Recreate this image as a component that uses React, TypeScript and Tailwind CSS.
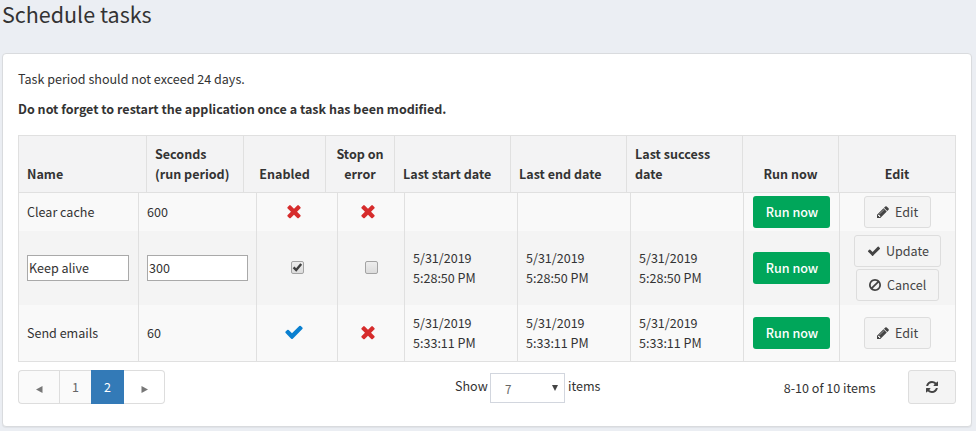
import type { ReactNode } from 'react';

const PATHS = {
  check:
    'M1671 566q0 40-28 68l-724 724-136 136q-28 28-68 28t-68-28l-136-136-362-362q-28-28-28-68t28-68l136-136q28-28 68-28t68 28l294 295 656-657q28-28 68-28t68 28l136 136q28 28 28 68z',
  times:
    'M1490 1322q0 40-28 68l-136 136q-28 28-68 28t-68-28l-294-294-294 294q-28 28-68 28t-68-28l-136-136q-28-28-28-68t28-68l294-294-294-294q-28-28-28-68t28-68l136-136q28-28 68-28t68 28l294 294 294-294q28-28 68-28t68 28l136 136q28 28 28 68t-28 68l-294 294 294 294q28 28 28 68z',
  pencil:
    'M491 1536l91-91-235-235-91 91v107h128v128h107zm523-928q0-22-22-22-10 0-17 7l-542 542q-7 7-7 17 0 22 22 22 10 0 17-7l542-542q7-7 7-17zm-54-192l416 416-832 832h-416v-416zm683 96q0 53-37 90l-166 166-416-416 166-165q36-38 90-38 53 0 91 38l235 234q37 39 37 91z',
  ban: 'M1440 893q0-161-87-295l-754 753q137 89 297 89 111 0 211.5-43.5t173.5-116.5 116-174.5 43-212.5zm-999 299l755-754q-135-91-300-91-148 0-273 73t-198 199-73 274q0 162 89 299zm1223-299q0 157-61 300t-163.5 246-245 164-298.5 61-298.5-61-245-164-163.5-246-61-300 61-299.5 163.5-245.5 245-164 298.5-61 298.5 61 245 164 163.5 245.5 61 299.5z',
  refresh:
    'M1639 1056q0 5-1 7-64 268-268 434.5t-478 166.5q-146 0-282.5-55t-243.5-157l-129 129q-19 19-45 19t-45-19-19-45v-448q0-26 19-45t45-19h448q26 0 45 19t19 45-19 45l-137 137q71 66 161 102t187 36q134 0 250-65t186-179q11-17 53-117 8-23 30-23h192q13 0 22.5 9.5t9.5 22.5zm25-800v448q0 26-19 45t-45 19h-448q-26 0-45-19t-19-45 19-45l138-138q-148-137-349-137-134 0-250 65t-186 179q-11 17-53 117-8 23-30 23h-199q-13 0-22.5-9.5t-9.5-22.5v-7q65-268 270-434.5t480-166.5q146 0 284 55.5t245 156.5l130-129q19-19 45-19t45 19 19 45z',
};

function Icon({ name, className }: { name: keyof typeof PATHS; className: string }) {
  return (
    <svg viewBox="0 0 1792 1792" fill="currentColor" className={`shrink-0 ${className}`}>
      <path d={PATHS[name]} />
    </svg>
  );
}

function HeadCell({ children, center }: { children: ReactNode; center?: boolean }) {
  return (
    <div
      className={`flex flex-col justify-end border-l border-[#e0e0e0] px-2 pb-2 font-bold whitespace-nowrap ${center ? 'items-center' : ''}`}
    >
      {children}
    </div>
  );
}

function Cell({ children, center }: { children?: ReactNode; center?: boolean }) {
  return (
    <div
      className={`flex flex-col justify-center border-l border-[#e0e0e0] px-2 whitespace-nowrap ${center ? 'items-center' : ''}`}
    >
      {children}
    </div>
  );
}

function Row({ className, children }: { className: string; children: ReactNode }) {
  return (
    <div className={`grid grid-cols-[120px_118px_81px_67px_113px_113px_113px_96px_116px] ${className}`}>
      {children}
    </div>
  );
}

function Status({ on }: { on: boolean }) {
  return on ? (
    <Icon name="check" className="mr-[5.5px] mb-[2px] size-5 text-[#0a80d0]" />
  ) : (
    <Icon name="times" className="mr-[5.5px] mb-[2px] size-5 text-[#d62c2c]" />
  );
}

function Check({ checked }: { checked?: boolean }) {
  return (
    <div className="mb-[2px] flex size-[13px] items-center justify-center rounded-[2px] border border-[#a3a3a3] bg-linear-to-b from-[#ededed] to-[#dcdcdc]">
      {checked && (
        <svg viewBox="0 0 11 11" className="size-[11px]">
          <path d="M1.6 5.3 4.2 8 9.2 2" fill="none" stroke="#404040" strokeWidth="2.4" />
        </svg>
      )}
    </div>
  );
}

function RunCell() {
  return (
    <Cell center>
      <button className="h-8 w-[77px] rounded-[3px] bg-[#00a65a] pl-px font-medium text-white">Run now</button>
    </Cell>
  );
}

function ActionButton({ icon, label, className }: { icon: 'pencil' | 'check' | 'ban'; label: string; className: string }) {
  return (
    <button
      className={`flex h-8 items-center rounded-[3px] border border-[#ddd] bg-[#f4f4f4] pl-3 text-[#444] ${className}`}
    >
      <Icon name={icon} className={icon === 'check' ? 'mr-[5px] size-[14px]' : 'mr-[5px] -ml-px size-[14px]'} />
      {label}
    </button>
  );
}

function DateCell({ time }: { time?: string }) {
  return (
    <Cell>
      {time && (
        <>
          <div>5/31/2019</div>
          <div>{time}</div>
        </>
      )}
    </Cell>
  );
}

export default function App() {
  return (
    <div className="h-[431px] bg-[#ebeef3] pl-[2px] font-['Noto_Sans_CJK_SC',sans-serif] text-[12.55px] leading-5 text-[#333]">
      <h1 className="h-[53px] text-[21.5px] leading-[27px] font-normal">Schedule tasks</h1>
      <div className="h-[374px] w-[970px] rounded-[4px] border border-[#d9dbde] bg-white px-[15px] pt-[15px] shadow-[0_1px_1px_rgba(0,0,0,0.05)]">
        <p className="mb-[10px]">Task period should not exceed 24 days.</p>
        <p className="mb-4 text-[12.52px] font-bold">Do not forget to restart the application once a task has been modified.</p>

        <div className="w-[938px] border-y border-r border-[#e0e0e0]">
          <div className="grid h-[57px] grid-cols-[128px_97px_82px_69px_116px_116px_116px_96px_117px] border-b border-[#e0e0e0] bg-[#f3f3f4]">
            <HeadCell>Name</HeadCell>
            <HeadCell>
              <div>Seconds</div>
              <div>(run period)</div>
            </HeadCell>
            <HeadCell center>Enabled</HeadCell>
            <HeadCell center>
              <div>Stop on</div>
              <div>error</div>
            </HeadCell>
            <HeadCell>Last start date</HeadCell>
            <HeadCell>Last end date</HeadCell>
            <HeadCell>
              <div>Last success</div>
              <div>date</div>
            </HeadCell>
            <HeadCell center>Run now</HeadCell>
            <HeadCell center>Edit</HeadCell>
          </div>

          <Row className="h-[38px] bg-[#f9f9f9]">
            <Cell>Clear cache</Cell>
            <Cell>600</Cell>
            <Cell center><Status on={false} /></Cell>
            <Cell center><Status on={false} /></Cell>
            <DateCell />
            <DateCell />
            <DateCell />
            <RunCell />
            <Cell center>
              <ActionButton icon="pencil" label="Edit" className="w-[67px]" />
            </Cell>
          </Row>

          <Row className="h-[74px] bg-[#f4f4f4]">
            <Cell>
              <input defaultValue="Keep alive" className="h-[26px] w-[102px] border border-[#a9a9a9] bg-white px-px pb-px outline-none" />
            </Cell>
            <Cell>
              <input defaultValue="300" className="h-[26px] w-[101px] border border-[#a9a9a9] bg-white px-px pb-px outline-none" />
            </Cell>
            <Cell center><Check checked /></Cell>
            <Cell center><Check /></Cell>
            <DateCell time="5:28:50 PM" />
            <DateCell time="5:28:50 PM" />
            <DateCell time="5:28:50 PM" />
            <RunCell />
            <Cell center>
              <ActionButton icon="check" label="Update" className="mb-[2px] w-[87px]" />
              <ActionButton icon="ban" label="Cancel" className="w-[83px]" />
            </Cell>
          </Row>

          <Row className="h-[56px] bg-[#f9f9f9]">
            <Cell>Send emails</Cell>
            <Cell>60</Cell>
            <Cell center><Status on /></Cell>
            <Cell center><Status on={false} /></Cell>
            <DateCell time="5:33:11 PM" />
            <DateCell time="5:33:11 PM" />
            <DateCell time="5:33:11 PM" />
            <RunCell />
            <Cell center>
              <ActionButton icon="pencil" label="Edit" className="w-[67px]" />
            </Cell>
          </Row>
        </div>

        <div className="mt-2 flex h-[34px] w-[938px]">
          <div className="flex w-[147px] text-[#666]">
            <button className="flex w-[41px] items-center justify-center rounded-l-[4px] border border-r-0 border-[#ddd] bg-[#fafafa]">
              <svg viewBox="0 0 7 7" className="mt-1 h-[7px] w-[7px]"><path d="M6.5 0v7L0 3.5z" fill="#777" /></svg>
            </button>
            <button className="w-8 border-y border-l border-[#ddd] bg-[#fafafa]">1</button>
            <button className="w-[33px] bg-[#337ab7] text-white">2</button>
            <button className="flex w-[41px] items-center justify-center rounded-r-[4px] border border-l-0 border-[#ddd] bg-white">
              <svg viewBox="0 0 7 7" className="mt-1 h-[7px] w-[7px]"><path d="M.5 0v7L7 3.5z" fill="#777" /></svg>
            </button>
          </div>
          <div className="ml-[290px] w-[35px] pt-[6px]">Show</div>
          <div className="mt-[3px] flex h-[30px] w-[75px] items-center justify-between border border-[#d2d6de] pr-[6px] pl-[14px] text-[#666]">
            <span className="pt-px text-[11.6px]">7</span>
            <svg viewBox="0 0 6 6" className="mb-px size-[6px]"><path d="M0 0h6L3 6z" fill="#444" /></svg>
          </div>
          <div className="ml-[3px] pt-[6px]">items</div>
          <div className="ml-auto pt-[8px]">8-10 of 10 items</div>
          <button className="ml-[32.5px] flex w-12 items-center justify-center rounded-[3px] border border-[#ddd] bg-[#f4f4f4] text-[#444]">
            <Icon name="refresh" className="size-[14px]" />
          </button>
        </div>
      </div>
    </div>
  );
}
